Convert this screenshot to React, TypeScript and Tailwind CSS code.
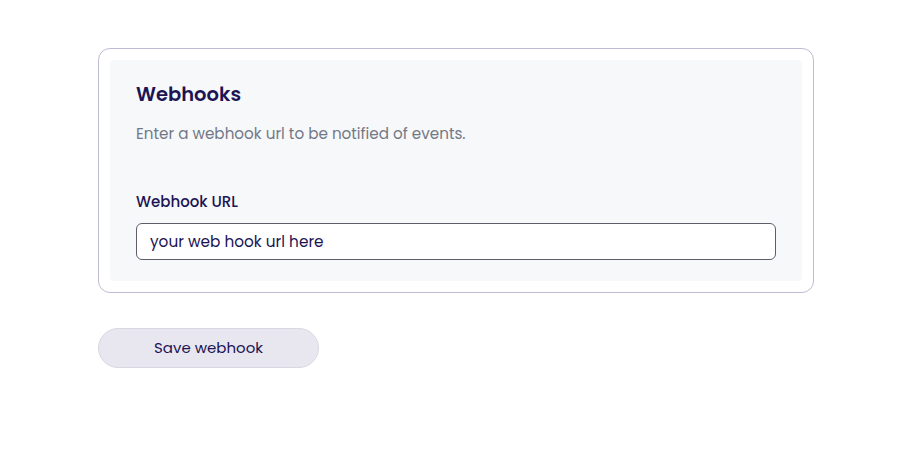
export default function App() {
  return (
    <div className="min-h-screen bg-white pt-12 pl-[98px] font-['Poppins','Inter',sans-serif] text-[#1c1454]">
      <div className="w-[716px] rounded-xl border border-[#bcbcd4] p-[11px]">
        <div className="rounded-sm bg-[#f7f8fa] px-[26px] pt-[23px] pb-[21px]">
          <h2 className="text-[19.5px] font-semibold leading-6">Webhooks</h2>
          <p className="mt-[17px] text-[15.2px] leading-5 text-[#737887]">
            Enter a webhook url to be notified of events.
          </p>
          <label className="mt-[48px] block text-[15px] font-medium leading-5">Webhook URL</label>
          <input
            type="text"
            defaultValue="your web hook url here"
            className="mt-[11px] block h-[37px] w-full rounded-md border border-[#5e5e6a] bg-white px-[13px] text-[15.3px] text-[#1c1454] outline-none"
          />
        </div>
      </div>
      <button className="mt-[35px] h-[40px] w-[221px] rounded-full border border-[#d9d7e2] bg-[#e8e7ef] text-[15px] text-[#1c1454]">
        Save webhook
      </button>
    </div>
  );
}
